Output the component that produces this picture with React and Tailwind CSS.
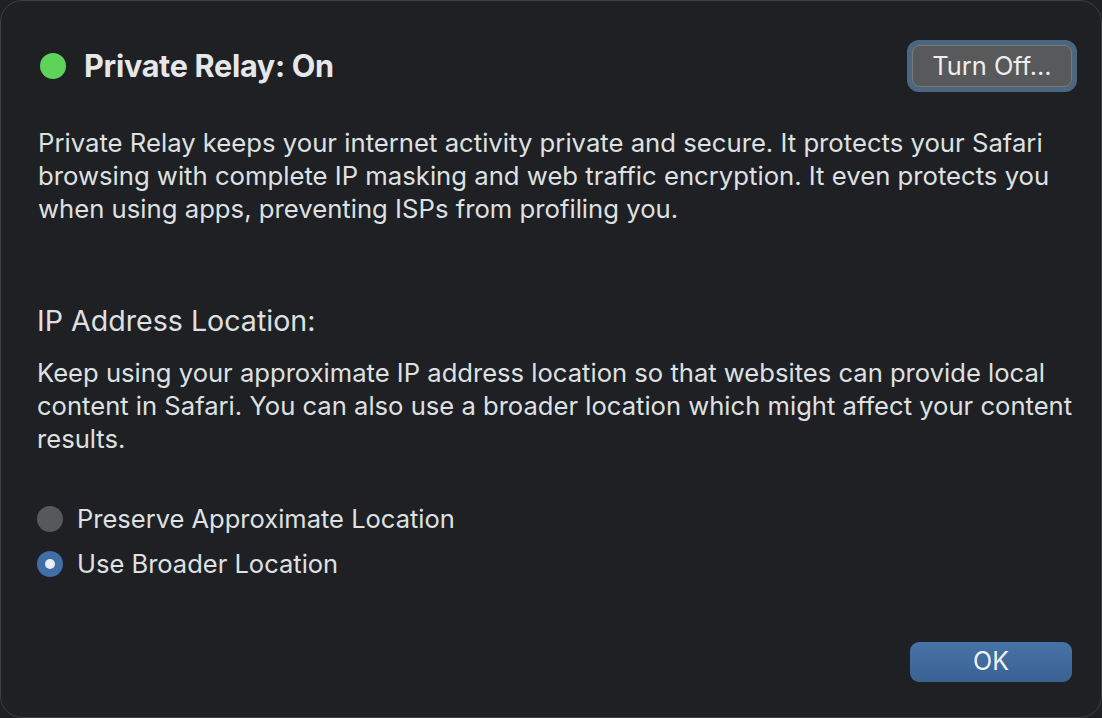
import React, { useState } from "react";

const App = () => {
  const [location, setLocation] = useState("broader");

  return (
    <div className="w-[1102px] h-[718px] bg-[#1e2024] overflow-hidden" style={{ fontFamily: "Inter, 'Noto Sans', sans-serif" }}>
      <div className="w-full h-full rounded-[22px] border border-[#3d3f43] flex flex-col pl-[36px] pr-[24px] pt-[39px] pb-[35px] text-[#dfe0e2]">
        {/* header */}
        <div className="flex items-center justify-between">
          <div className="flex items-center gap-[18px] pl-[3px]">
            <span className="w-[26px] h-[26px] rounded-full bg-[#5dd35a]"></span>
            <h1 className="text-[30.6px] font-bold text-[#e6e7e9] tracking-[-0.3px]">Private Relay: On</h1>
          </div>
          <button className="h-[52px] w-[170px] rounded-[12px] bg-[#4d6680] p-[5px]">
            <span className="flex items-center justify-center w-full h-full rounded-[8px] bg-[#58595b] border border-[#75787d] text-[25.4px] text-[#eeeeee]">
              Turn Off...
            </span>
          </button>
        </div>

        <p className="mt-[34px] pl-[1px] text-[25.7px] leading-[33px] whitespace-nowrap">
          Private Relay keeps your internet activity private and secure. It protects your Safari
          <br />
          browsing with complete IP masking and web traffic encryption. It even protects you
          <br />
          when using apps, preventing ISPs from profiling you.
        </p>

        <h2 className="mt-[80px] text-[28.6px] leading-[32px]">IP Address Location:</h2>

        <p className="mt-[19px] text-[25.6px] leading-[33px] whitespace-nowrap">
          Keep using your approximate IP address location so that websites can provide local
          <br />
          content in Safari. You can also use a broader location which might affect your content
          <br />
          results.
        </p>

        <div className="mt-[51px] flex flex-col gap-[19px]">
          <label className="flex items-center gap-[14px] cursor-pointer" onClick={() => setLocation("approximate")}>
            {location === "approximate" ? (
              <span className="w-[26px] h-[26px] rounded-full bg-[#3f6ea8] flex items-center justify-center">
                <span className="w-[10px] h-[10px] rounded-full bg-[#e8eef6]"></span>
              </span>
            ) : (
              <span className="w-[26px] h-[26px] rounded-full bg-[#56585b]"></span>
            )}
            <span className="text-[25.5px] leading-[26px]">Preserve Approximate Location</span>
          </label>
          <label className="flex items-center gap-[14px] cursor-pointer" onClick={() => setLocation("broader")}>
            {location === "broader" ? (
              <span className="w-[26px] h-[26px] rounded-full bg-[#3f6ea8] flex items-center justify-center">
                <span className="w-[10px] h-[10px] rounded-full bg-[#e8eef6]"></span>
              </span>
            ) : (
              <span className="w-[26px] h-[26px] rounded-full bg-[#56585b]"></span>
            )}
            <span className="text-[25.5px] leading-[26px]">Use Broader Location</span>
          </label>
        </div>

        <div className="mt-auto flex justify-end pr-[5px]">
          <button className="w-[162px] h-[40px] rounded-[9px] bg-gradient-to-b from-[#4772a6] to-[#3a6293] text-[25px] text-[#eef2f7]">
            OK
          </button>
        </div>
      </div>
    </div>
  );
};

export default App;
